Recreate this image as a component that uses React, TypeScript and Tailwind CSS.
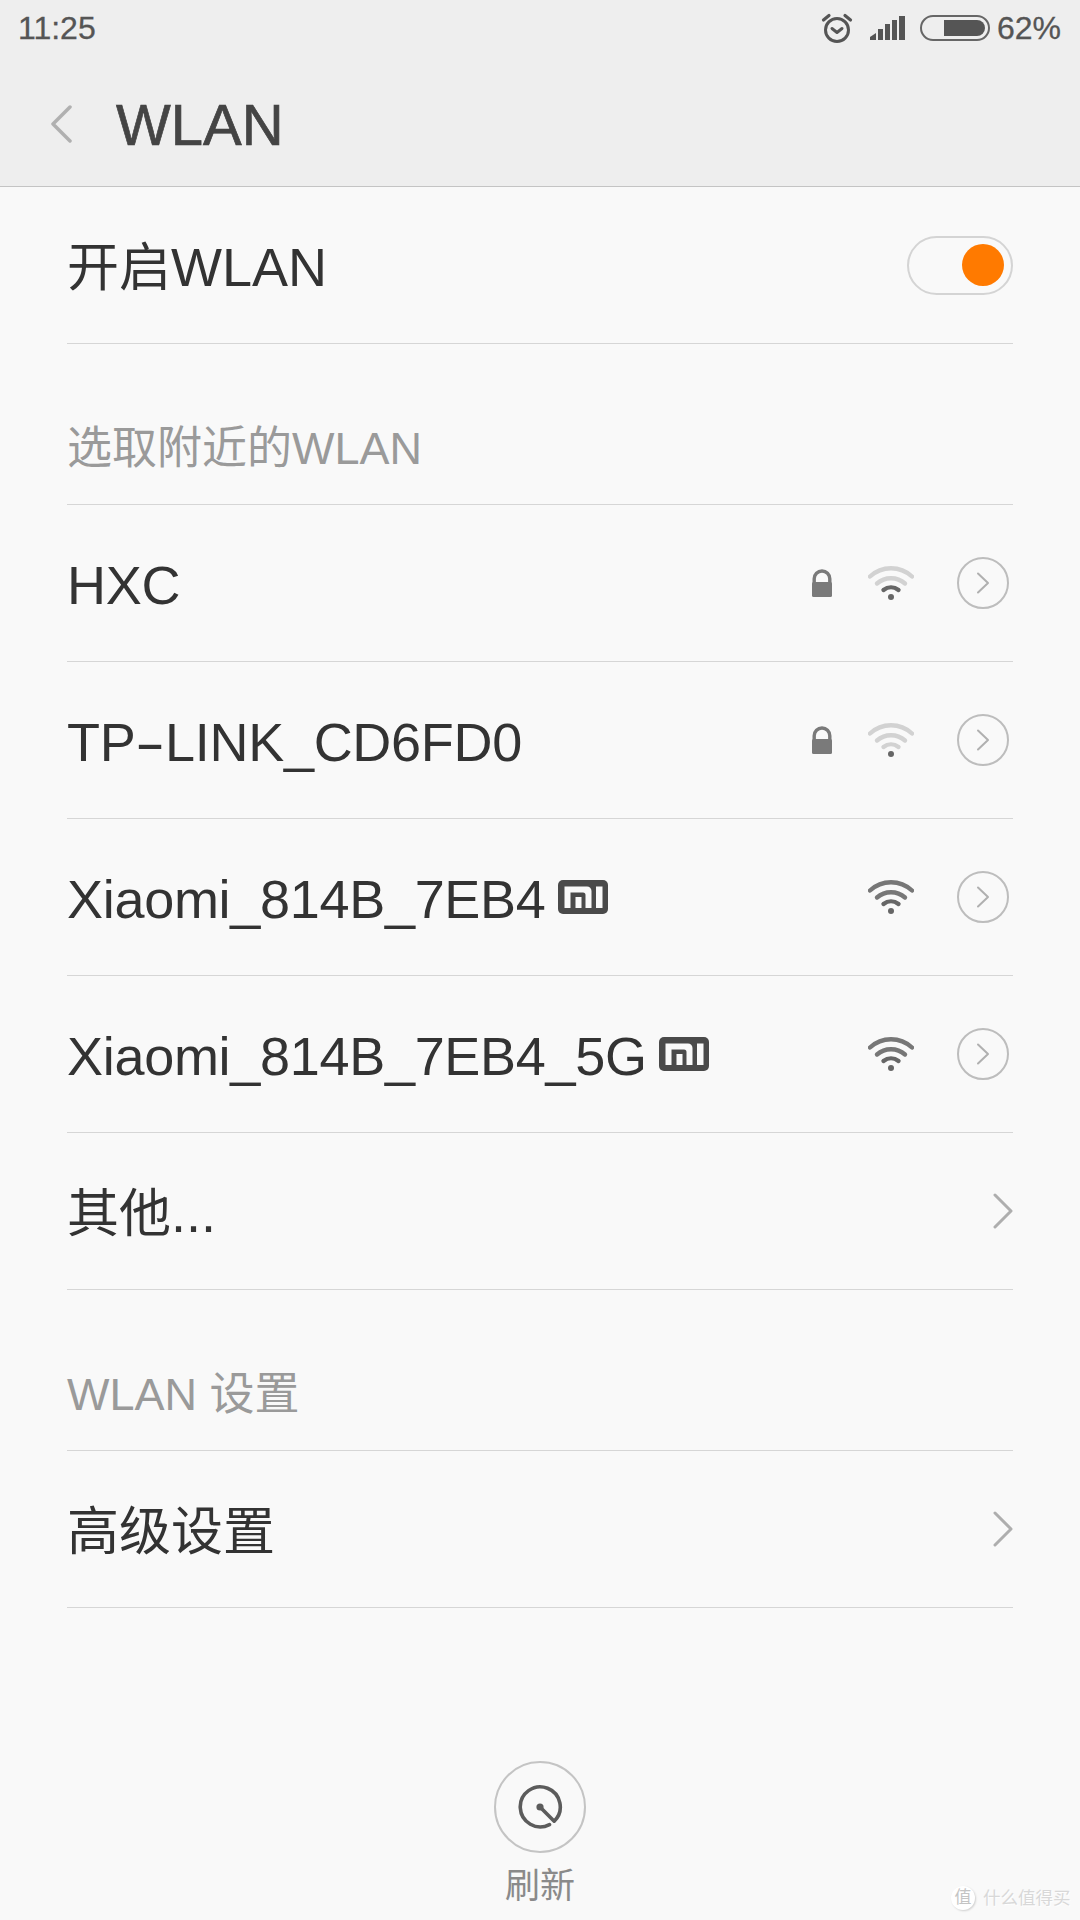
import React from "react";

const FONT = "[font-family:'Liberation_Sans','Noto_Sans_CJK_SC',sans-serif]";

function Alarm() {
  return (
    <svg width="32" height="32" viewBox="0 0 32 32" fill="none" stroke="#555" strokeWidth="3" strokeLinecap="round" strokeLinejoin="round">
      <circle cx="16" cy="18" r="11.5" />
      <path d="M11 16.5l5 4 5-4" />
      <path d="M2.5 8 L8 3.5" strokeWidth="3.2" />
      <path d="M29.5 8 L24 3.5" strokeWidth="3.2" />
    </svg>
  );
}

function Signal() {
  return (
    <svg width="36" height="24" viewBox="0 0 36 24" fill="#555">
      <path d="M0 24V21L6 17V24Z" />
      <rect x="8" y="13" width="5" height="11" />
      <rect x="15" y="8" width="5" height="16" />
      <rect x="22" y="4" width="5" height="20" />
      <rect x="29" y="0" width="6" height="24" />
    </svg>
  );
}

function Battery() {
  return (
    <div className="flex h-[26px] w-[70px] items-center justify-end rounded-full border-2 border-[#666666] p-[3px]">
      <div className="h-[16px] w-[41px] rounded-r-full bg-[#555555]" />
    </div>
  );
}

function Lock() {
  return (
    <svg width="20" height="28" viewBox="0 0 20 28">
      <path d="M2.2 15V9.8a7.8 7.8 0 0 1 15.6 0V15" fill="none" stroke="#7a7a7a" strokeWidth="3.4" />
      <rect x="0" y="13" width="20" height="15" rx="1.5" fill="#7a7a7a" />
    </svg>
  );
}

// Signal arcs: `lit` says how many of the three arcs are dark.
function Wifi({ lit }: { lit: number }) {
  const on = "#777777";
  const off = "#d2d2d2";
  return (
    <svg width="46" height="36" viewBox="0 0 46 36" fill="none" strokeWidth="4.4" strokeLinecap="round">
      <path d="M2 11.5C14 .5 32 .5 44 11.5" stroke={lit >= 3 ? on : off} />
      <path d="M9 18.5C17 11.5 29 11.5 37 18.5" stroke={lit >= 2 ? on : off} />
      <path d="M15.5 25C20 21.5 26 21.5 30.5 25" stroke={lit >= 1 ? "#666666" : off} />
      <circle cx="23" cy="32" r="3" fill="#666666" />
    </svg>
  );
}

function CircleChevron() {
  return (
    <div className="flex h-[52px] w-[52px] items-center justify-center rounded-full border-2 border-[#bdbdbd]">
      <svg width="14" height="22" viewBox="0 0 14 22" fill="none" stroke="#b0b0b0" strokeWidth="2" strokeLinecap="round" strokeLinejoin="round">
        <path d="M2 1.5 L12 11 L2 20.5" />
      </svg>
    </div>
  );
}

function Chevron() {
  return (
    <svg width="20" height="36" viewBox="0 0 20 36" fill="none" stroke="#aeaeae" strokeWidth="3" strokeLinecap="round" strokeLinejoin="round">
      <path d="M2 2 L18 18 L2 34" />
    </svg>
  );
}

function MiBadge() {
  return (
    <svg width="50" height="34" viewBox="0 0 50 34">
      <rect width="50" height="34" rx="5" fill="#4a4a4a" />
      <path d="M6.5 6.5H29a4.5 4.5 0 0 1 4.5 4.5V28H27.5V15a2.5 2.5 0 0 0-2.5-2.5H12.5V28H6.5Z" fill="#f9f9f9" />
      <rect x="17.5" y="17" width="6" height="11" fill="#f9f9f9" />
      <rect x="38" y="6.5" width="6.5" height="21.5" fill="#f9f9f9" />
    </svg>
  );
}

function Row({ children }: { children: React.ReactNode }) {
  return (
    <div className="flex h-[157px] items-center border-b border-[#d6d6d6] text-[54px] text-[#333333]">
      {children}
    </div>
  );
}

function Network({ name, lock, lit, mi }: { name: React.ReactNode; lock?: boolean; lit: number; mi?: boolean }) {
  return (
    <Row>
      <span className="pt-[5px] tracking-[-0.3px]">{name}</span>
      {mi && (
        <span className="ml-[12px] flex">
          <MiBadge />
        </span>
      )}
      <div className="ml-auto flex items-center pr-[4px]">
        {lock && <Lock />}
        <div className="ml-[36px] mr-[43px]">
          <Wifi lit={lit} />
        </div>
        <CircleChevron />
      </div>
    </Row>
  );
}

function SectionLabel({ children }: { children: React.ReactNode }) {
  return (
    <div className="flex h-[161px] items-end border-b border-[#d6d6d6] pb-[25px] text-[45px] leading-[60px] text-[#9a9a9a]">
      {children}
    </div>
  );
}

export default function App() {
  return (
    <div className={`relative flex h-[1920px] w-[1080px] flex-col overflow-hidden bg-[#f9f9f9] ${FONT}`}>
      <header className="h-[187px] shrink-0 border-b border-[#c4c4c4] bg-[#eeeeee]">
        <div className="flex h-[56px] items-center pl-[18px] pr-[19px] text-[32px] text-[#555555] [-webkit-text-stroke:0.3px_#555555]">
          <span>11:25</span>
          <div className="ml-auto flex items-center">
            <Alarm />
            <span className="ml-[17px] flex">
              <Signal />
            </span>
            <span className="ml-[14px] flex">
              <Battery />
            </span>
            <span className="ml-[7px]">62%</span>
          </div>
        </div>
        <div className="flex h-[130px] items-center pl-[50px] pt-[6px]">
          <svg width="22" height="38" viewBox="0 0 22 38" fill="none" stroke="#b0b0b0" strokeWidth="3.5" strokeLinecap="round" strokeLinejoin="round">
            <path d="M20 2 L3 19 L20 36" />
          </svg>
          <h1 className="ml-[44px] text-[58px] text-[#444444] [-webkit-text-stroke:0.7px_#444444]">WLAN</h1>
        </div>
      </header>

      <main className="flex flex-1 flex-col px-[67px]">
        <Row>
          <span className="pt-[5px]">
            <span className="text-[52px]">开启</span>WLAN
          </span>
          <div className="ml-auto flex h-[59px] w-[106px] items-center justify-end rounded-full border-2 border-[#d4d4d4] pr-[7px]">
            <div className="h-[42px] w-[42px] rounded-full bg-[#ff7a00]" />
          </div>
        </Row>

        <SectionLabel>选取附近的WLAN</SectionLabel>
        <Network name="HXC" lock lit={1} />
        <Network
          name={
            <>
              TP<span className="mx-[6px] inline-block scale-x-[1.7]">-</span>LINK_CD6FD0
            </>
          }
          lock
          lit={0}
        />
        <Network name="Xiaomi_814B_7EB4" lit={3} mi />
        <Network name="Xiaomi_814B_7EB4_5G" lit={3} mi />
        <Row>
          <span className="pt-[5px]">
            <span className="text-[52px]">其他</span>...
          </span>
          <div className="ml-auto">
            <Chevron />
          </div>
        </Row>

        <SectionLabel>WLAN 设置</SectionLabel>
        <Row>
          <span className="pt-[5px] text-[52px]">高级设置</span>
          <div className="ml-auto">
            <Chevron />
          </div>
        </Row>

        <div className="mt-[153px] flex flex-col items-center">
          <div className="flex h-[92px] w-[92px] items-center justify-center rounded-full border-2 border-[#c4c4c4]">
            <svg width="46" height="46" viewBox="0 0 46 46" fill="none" stroke="#5c5c5c" strokeWidth="3.6" strokeLinecap="round" strokeLinejoin="round">
              <path d="M23 23 L37.2 37.2 A20 20 0 1 0 32.5 40.6" />
              <circle cx="23" cy="23" r="3.6" fill="#5c5c5c" stroke="none" />
            </svg>
          </div>
          <span className="mt-[9px] text-[35px] leading-[48px] text-[#8a8a8a]">刷新</span>
        </div>
      </main>

      {/* Publisher mark in the bottom corner */}
      <div className="absolute left-[951px] top-[1886px] flex items-center">
        <div className="flex h-[24px] w-[24px] items-center justify-center rounded-full bg-white text-[17px] text-[#c4c4c4] shadow-[1px_1px_2px_#d0d0d0]">值</div>
        <span className="ml-[8px] text-[17.5px] leading-[24px] text-[#d8d8d8] [text-shadow:1px_1px_1px_#ffffff]">什么值得买</span>
      </div>
    </div>
  );
}
